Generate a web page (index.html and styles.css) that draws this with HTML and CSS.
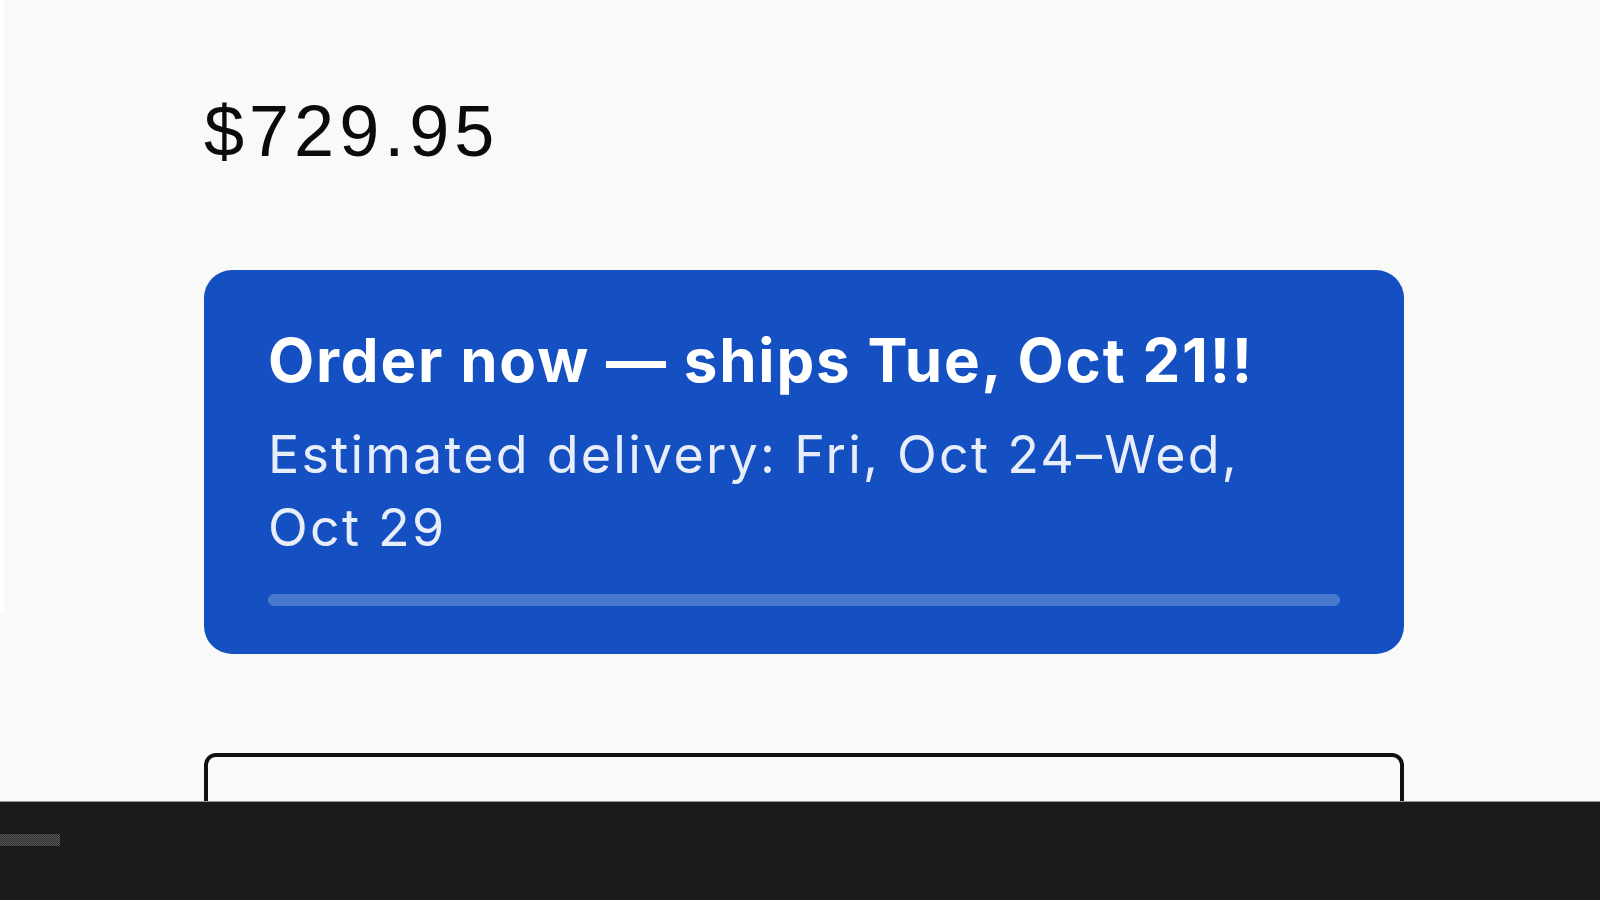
FILE: index.html
```html
<!doctype html>
<html>
	<head>
	<meta charset="utf-8">
	<title>Order</title>
	<link rel="stylesheet" href="styles.css">
	</head>

	<body>
		<div class="page">
			<p class="price">$729.95</p>

			<div class="ship-card">
				<h2 class="ship-title">Order now — ships Tue, Oct 21!!</h2>
				<p class="ship-eta">Estimated delivery: Fri, Oct 24–Wed, Oct 29</p>
				<div class="ship-track"></div>
			</div>

			<div class="options-box"></div>
		</div>

		<div class="dock">
			<span class="dock-grip"></span>
		</div>
	</body>
</html>
```

FILE: styles.css
```css
html, body {
	margin: 0;
	height: 100%;
	overflow: hidden;
}
body {
	background: linear-gradient(#fff, #fff) no-repeat 0 0 / 4px 613px, #f9f9f7;
	font-family: "Inter", "Liberation Sans", sans-serif;
}
.page {
	width: 1200px;
	margin-left: 204px;
	padding-top: 90px;
}
.price {
	margin: 0 0 98px;
	font-family: "Liberation Sans", Arial, sans-serif;
	font-size: 72px;
	letter-spacing: 5px;
	color: #0b0b0b;
}
.ship-card {
	background: #1450c1;
	border-radius: 28px;
	padding: 48px 64px;
	color: #fff;
}
.ship-title {
	margin: 0;
	font-size: 60px;
	line-height: 1.4;
	font-weight: 700;
	letter-spacing: 0.03em;
}
.ship-eta {
	margin: 17px 0 0;
	font-size: 52px;
	line-height: 1.4;
	letter-spacing: 0.043em;
	color: rgba(255, 255, 255, 0.9);
}
.ship-track {
	margin-top: 29px;
	height: 12px;
	border-radius: 6px;
	background: rgba(255, 255, 255, 0.24);
}
.options-box {
	margin-top: 99px;
	height: 160px;
	border: 4px solid #111;
	border-radius: 12px;
}
.dock {
	position: fixed;
	left: 0;
	right: 0;
	bottom: 0;
	height: 98px;
	background: #1b1b1b;
	border-top: 1px solid #9a9a9a;
}
.dock-grip {
	display: block;
	margin-top: 32px;
	width: 60px;
	height: 12px;
	background: repeating-conic-gradient(#5a5a5a 0 25%, #2c2c2c 0 50%) 0 0 / 2px 2px;
}
```
